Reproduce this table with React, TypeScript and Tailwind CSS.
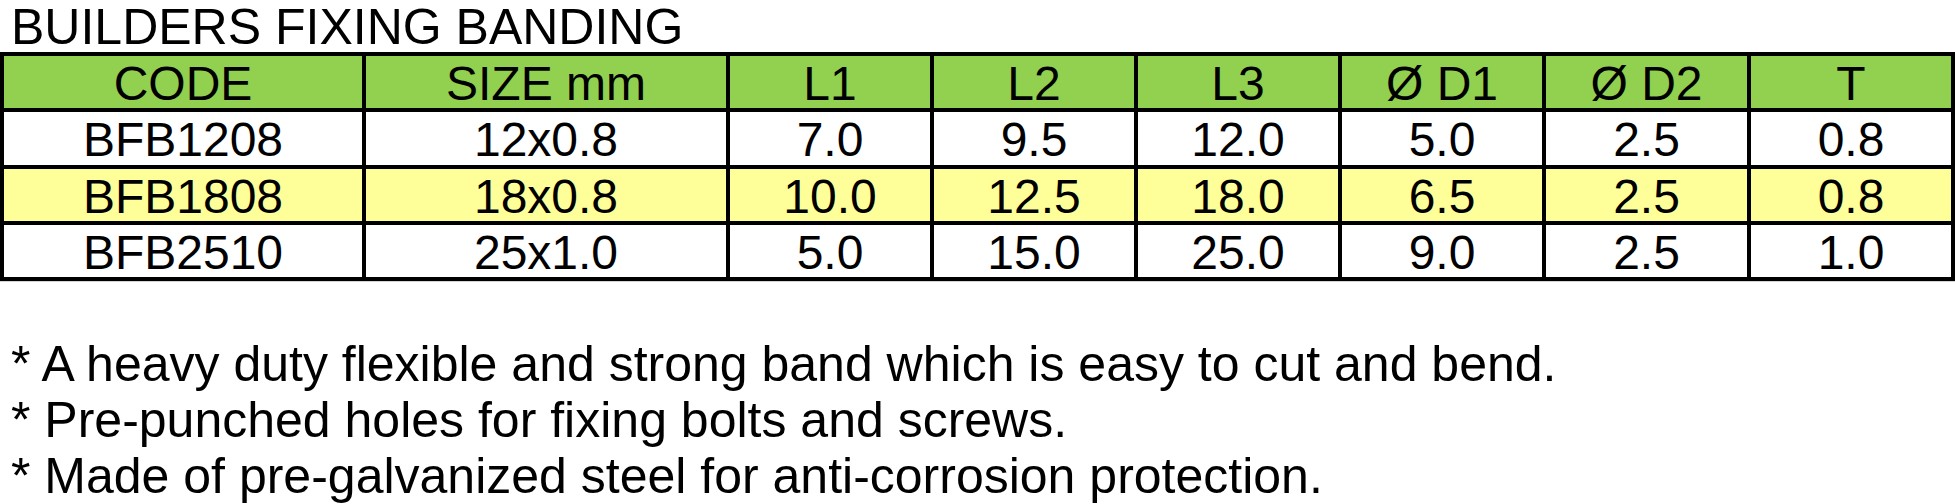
import React from "react";

const headers = ["CODE", "SIZE mm", "L1", "L2", "L3", "Ø D1", "Ø D2", "T"];
const rows = [
  ["BFB1208", "12x0.8", "7.0", "9.5", "12.0", "5.0", "2.5", "0.8"],
  ["BFB1808", "18x0.8", "10.0", "12.5", "18.0", "6.5", "2.5", "0.8"],
  ["BFB2510", "25x1.0", "5.0", "15.0", "25.0", "9.0", "2.5", "1.0"],
];

export default function App() {
  return (
    <div
      className="w-[1955px] h-[504px] overflow-hidden bg-white text-black"
      style={{ fontFamily: '"Liberation Sans", Arial, sans-serif' }}
    >
      <div className="h-[52px] pl-[11px] text-[50px] leading-[54px] whitespace-nowrap">
        BUILDERS FIXING BANDING
      </div>
      <div className="grid grid-cols-[358px_360px_200px_200px_200px_200px_201px_200px] grid-rows-[52px_53px_52px_52px] gap-[4px] p-[4px] bg-black">
        {headers.map((h) => (
          <div
            key={h}
            className="bg-[#92d050] flex items-center justify-center pt-[3px] text-[48px] leading-[48px] whitespace-nowrap"
          >
            {h}
          </div>
        ))}
        {rows.map((r, ri) =>
          r.map((c, ci) => (
            <div
              key={ri + "-" + ci}
              className={
                (ri === 1 ? "bg-[#ffff99] " : "bg-white ") +
                "flex items-center justify-center pt-[3px] text-[48px] leading-[48px] whitespace-nowrap"
              }
            >
              {c}
            </div>
          ))
        )}
      </div>
      <div className="h-px bg-[#d4d4d4]" />
      <div className="pt-[54px] pl-[11px] text-[50px] leading-[56px] whitespace-nowrap">
        <div>* A heavy duty flexible and strong band which is easy to cut and bend.</div>
        <div>* Pre-punched holes for fixing bolts and screws.</div>
        <div>* Made of pre-galvanized steel for anti-corrosion protection.</div>
      </div>
    </div>
  );
}
